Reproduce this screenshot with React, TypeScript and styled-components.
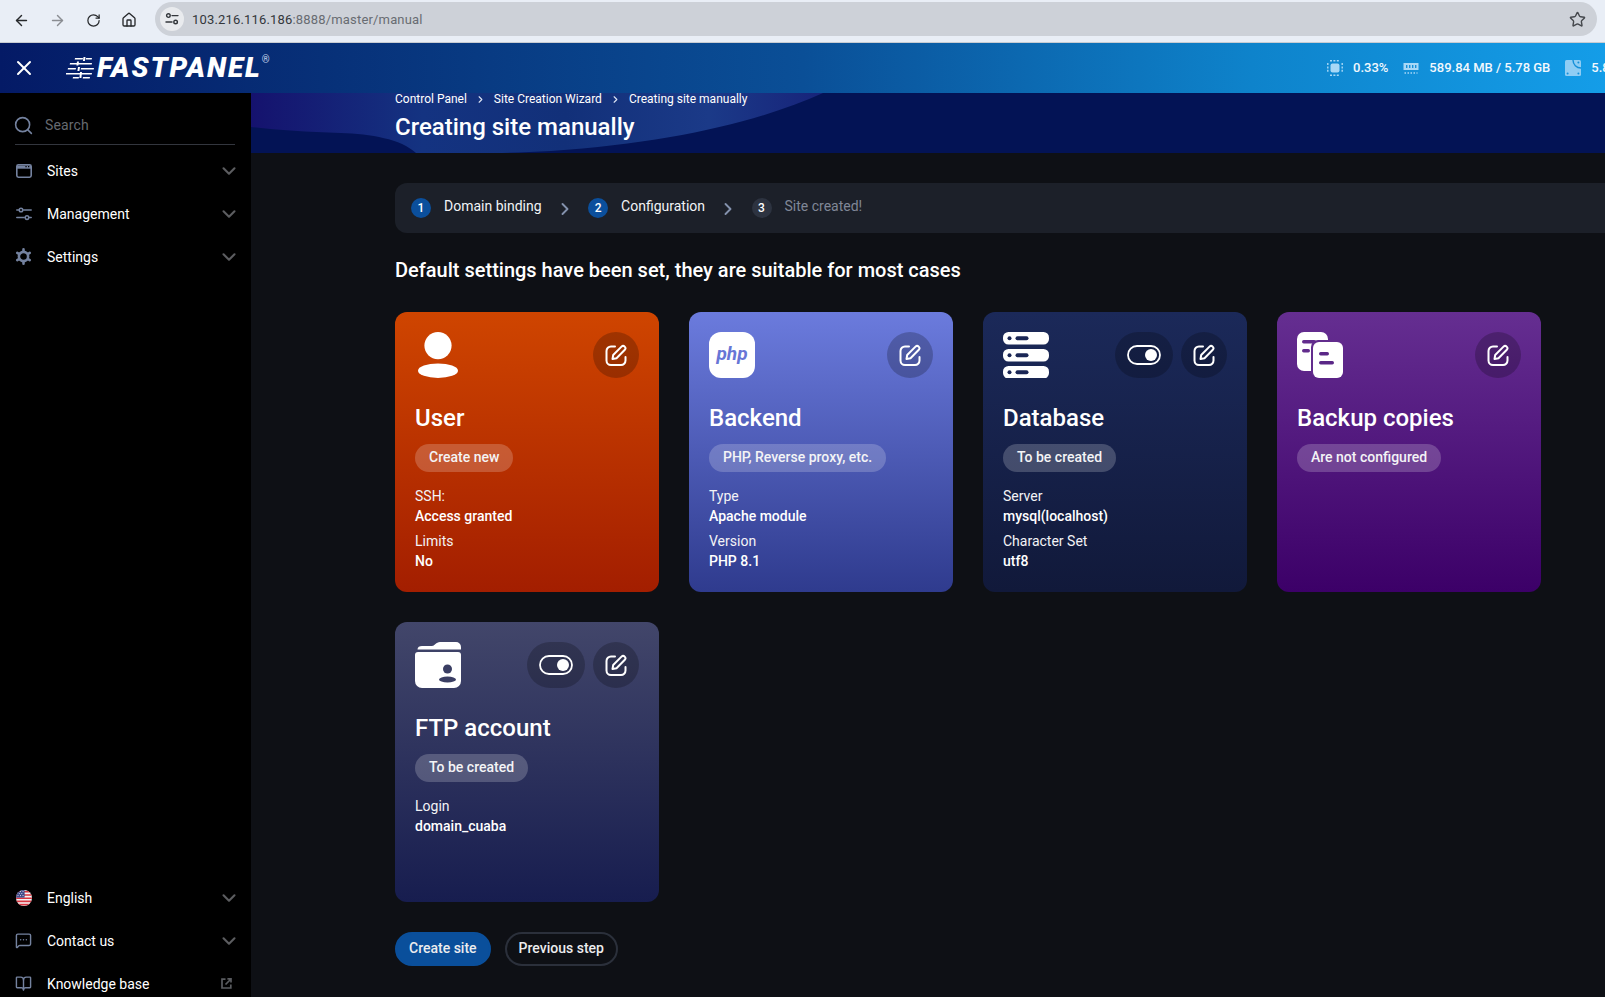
import React from 'react';
import styled, { createGlobalStyle } from 'styled-components';
import { ArrowLeft, ArrowRight, BookOpen, ChevronDown, ChevronRight, Home, MessageSquareMore, RotateCw, Search, Star, X } from 'lucide-react';

const GlobalStyle = createGlobalStyle`
  html, body {
    margin: 0;
    height: 100%;
    overflow: hidden;
    background: #0e1015;
  }
  body {
    font-family: 'Roboto', 'Liberation Sans', sans-serif;
    font-size: 14px;
    color: #fff;
  }
  * {
    box-sizing: border-box;
  }
`;

const Page = styled.div`
  width: 100vw;
  height: 100vh;
  display: flex;
  flex-direction: column;
  overflow: hidden;
`;

const BrowserBar = styled.div`
  height: 43px;
  flex: none;
  display: flex;
  align-items: flex-start;
  padding: 2px 0 0 3px;
  background: #e9eef6;
  border-bottom: 1px solid #c8ccd2;
  color: #3c4043;
`;

const NavButton = styled.div<{ $dim?: boolean }>`
  width: 36px;
  height: 36px;
  display: flex;
  align-items: center;
  justify-content: center;
  color: ${(p) => (p.$dim ? '#8a8d92' : '#26282b')};
`;

const UrlPill = styled.div`
  width: 1442px;
  height: 34px;
  margin-left: 8px;
  display: flex;
  align-items: center;
  padding: 0 11px 0 5px;
  border-radius: 17px;
  background: #cdd1d8;
  font-size: 13px;
  letter-spacing: 0.17px;
`;

const SiteInfo = styled.div`
  width: 24px;
  height: 24px;
  margin-right: 8px;
  display: flex;
  align-items: center;
  justify-content: center;
  border-radius: 50%;
  background: #e9ebee;
`;

const UrlHost = styled.span`
  color: #33373b;
`;

const UrlPath = styled.span`
  color: #686c72;
  flex: 1;
`;

const TopBar = styled.header`
  height: 50px;
  flex: none;
  display: flex;
  align-items: center;
  overflow: hidden;
  background: linear-gradient(90deg, #041a66 0%, #073078 20%, #0a4f97 50%, #0e83cb 78%, #149de8 100%);
`;

const CloseButton = styled.div`
  width: 48px;
  flex: none;
  display: flex;
  justify-content: center;
`;

const Logo = styled.div`
  width: 212px;
  display: flex;
  align-items: center;
  margin-left: 18px;
  flex: none;
`;

const LogoWord = styled.span`
  margin-left: 1px;
  font-size: 28px;
  line-height: 30px;
  font-weight: 900;
  font-style: italic;
  letter-spacing: 1.9px;
`;

const LogoMark = styled.sup`
  font-size: 10px;
  line-height: 10px;
  align-self: flex-start;
  margin: 2px 0 0 0;
  color: #c7d3ea;
`;

const Stats = styled.div`
  margin-left: 1049px;
  padding-bottom: 1px;
  display: flex;
  align-items: center;
  flex: none;
  font-size: 13px;
  font-weight: 500;
  color: #f2f8fd;
`;

const Stat = styled.div`
  display: flex;
  align-items: center;
  gap: 10px;
  margin-right: 15px;
  white-space: nowrap;
`;

const Body = styled.div`
  flex: 1;
  min-height: 0;
  display: flex;
`;

const Sidebar = styled.nav`
  width: 251px;
  flex: none;
  display: flex;
  flex-direction: column;
  justify-content: space-between;
  overflow: hidden;
  background: #000;
  padding: 0 16px 0 15px;
`;

const SearchRow = styled.div`
  height: 52px;
  display: flex;
  align-items: center;
  gap: 11px;
  padding-top: 13px;
  margin-bottom: 4px;
  border-bottom: 1px solid #33363e;
  color: #666a70;
  font-size: 14px;
  letter-spacing: 0.15px;
`;

const SearchIcon = styled(Search)`
  margin-left: -2px;
`;

const MenuGroup = styled.div<{ $bottom?: boolean }>`
  display: flex;
  flex-direction: column;
  margin-bottom: ${(p) => (p.$bottom ? '-8px' : '0')};
`;

const MenuRow = styled.div`
  height: 43px;
  display: flex;
  align-items: center;
  gap: 15px;
  font-size: 14px;
  color: #fff;
`;

const MenuIcon = styled.span`
  width: 17px;
  height: 17px;
  flex: none;
  display: flex;
  align-items: center;
  justify-content: center;
  color: #74829f;
`;

const MenuLabel = styled.span`
  flex: 1;
`;

const MenuChevron = styled(ChevronDown)`
  margin-right: -5px;
  color: #5c5d60;
`;

const OutLink = styled.svg`
  margin-right: 3px;
`;

const Main = styled.main`
  flex: 1;
  min-width: 0;
  display: flex;
  flex-direction: column;
  background: #0e1015;
`;

const PageHead = styled.div`
  position: relative;
  height: 60px;
  flex: none;
  overflow: hidden;
  padding-left: 144px;
  background: #031355;
`;

const Swoosh = styled.svg`
  position: absolute;
  top: 0;
  left: 0;
`;

const Crumbs = styled.div`
  position: relative;
  display: flex;
  align-items: center;
  height: 12px;
  font-size: 12px;
  line-height: 12px;
`;

const CrumbArrow = styled.span`
  display: flex;
  width: 27px;
  justify-content: center;
  color: #dfe6f5;
`;

const PageTitle = styled.h1`
  position: relative;
  margin: 6px 0 0;
  font-size: 24px;
  line-height: 32px;
  font-weight: 500;
`;

const Content = styled.div`
  padding: 30px 0 0 144px;
`;

const Stepper = styled.div`
  width: 1300px;
  height: 50px;
  display: flex;
  align-items: center;
  padding-left: 16px;
  border-radius: 12px;
  background: #1c2029;
`;

const StepNumber = styled.span<{ $active: boolean }>`
  width: 20px;
  height: 20px;
  flex: none;
  display: flex;
  align-items: center;
  justify-content: center;
  border-radius: 50%;
  font-size: 12px;
  font-weight: 500;
  background: ${(p) => (p.$active ? '#0b4f9c' : '#2d3340')};
`;

const StepLabel = styled.span<{ $active: boolean }>`
  margin-left: 13px;
  margin-bottom: 4px;
  color: ${(p) => (p.$active ? '#f1f3f6' : '#808797')};
`;

const StepArrow = styled.span`
  width: 46.5px;
  display: flex;
  justify-content: center;
  padding-top: 2px;
  color: #8391ac;
`;

const Heading = styled.h2`
  margin: 23px 0 28px;
  font-size: 20px;
  line-height: 28px;
  font-weight: 500;
`;

const CardGrid = styled.div`
  display: grid;
  grid-template-columns: repeat(4, 264px);
  grid-auto-rows: 280px;
  gap: 30px;
`;

const Card = styled.section<{ $from: string; $to: string }>`
  padding: 20px;
  border-radius: 12px;
  background: linear-gradient(180deg, ${(p) => p.$from}, ${(p) => p.$to});
`;

const CardTop = styled.div`
  height: 46px;
  display: flex;
  align-items: flex-start;
  gap: 8px;
`;

const CardIcon = styled.div`
  height: 46px;
  margin-right: auto;
  display: flex;
`;

const RoundButton = styled.div<{ $wide?: boolean }>`
  width: ${(p) => (p.$wide ? '58px' : '46px')};
  height: 46px;
  display: flex;
  align-items: center;
  justify-content: center;
  border-radius: 23px;
  background: rgba(0, 0, 0, 0.22);
`;

const CardTitle = styled.h3`
  margin: 24px 0 0;
  font-size: 24px;
  line-height: 32px;
  font-weight: 500;
`;

const Pill = styled.div`
  display: inline-flex;
  align-items: center;
  height: 28px;
  margin-top: 10px;
  padding: 0 14px 2px;
  border-radius: 14px;
  background: rgba(255, 255, 255, 0.2);
  font-weight: 500;
  color: #f4f4f6;
`;

const MetaList = styled.dl`
  margin: 14px 0 0;
  display: flex;
  flex-direction: column;
  gap: 5px;
`;

const MetaLabel = styled.dt`
  line-height: 20px;
  color: #f3f3f6;
`;

const MetaValue = styled.dd`
  margin: 0;
  line-height: 20px;
  font-weight: 500;
`;

const Actions = styled.div`
  display: flex;
  gap: 14px;
  margin-top: 30px;
`;

const ActionButton = styled.button<{ $primary?: boolean }>`
  height: 34px;
  padding: 0 12px 2px;
  border-radius: 17px;
  border: 2px solid ${(p) => (p.$primary ? '#0a4f9b' : '#2b303b')};
  background: ${(p) => (p.$primary ? '#0a4f9b' : 'transparent')};
  color: #ececee;
  font: 500 14px 'Roboto', sans-serif;
`;

const EditIcon = () => (
  <svg width="22" height="22" viewBox="0 0 22 22" fill="none" stroke="#fff" strokeWidth="2" strokeLinecap="round" strokeLinejoin="round">
    <path d="M10 2.5H6A4.5 4.5 0 0 0 1.5 7v9.5A4.5 4.5 0 0 0 6 21h10a4.5 4.5 0 0 0 4.5-4.5V13" />
    <path d="M7.5 15l.7-4L16.5 2.6a2.3 2.3 0 0 1 3.3 3.2L11.5 14.2z" />
  </svg>
);

const ToggleIcon = () => (
  <svg width="34" height="20" viewBox="0 0 34 20" fill="none">
    <rect x="1" y="1" width="32" height="18" rx="9" stroke="#fff" strokeWidth="1.8" />
    <circle cx="24" cy="10" r="6" fill="#fff" />
  </svg>
);

const UserIcon = () => (
  <svg width="46" height="46" viewBox="-3 0 46 46" fill="#fff">
    <circle cx="20" cy="13.6" r="13.6" />
    <ellipse cx="20" cy="38.7" rx="20" ry="7.3" />
  </svg>
);

const PhpIcon = ({ color }: { color: string }) => (
  <svg width="46" height="46" viewBox="0 0 46 46">
    <rect width="46" height="46" rx="12" fill="#fff" />
    <text x="23" y="28" textAnchor="middle" fontFamily="Roboto, sans-serif" fontSize="19" fontWeight="700" fontStyle="italic" fill={color}>
      php
    </text>
  </svg>
);

const ServerIcon = () => (
  <svg width="46" height="46" viewBox="0 0 46 46">
    {[0, 17, 34].map((y) => (
      <g key={y}>
        <rect y={y} width="46" height="12.5" rx="5.5" fill="#fff" />
        <circle cx="6.5" cy={y + 6.3} r="2" fill="#1a2655" />
        <rect x="12.5" y={y + 4.3} width="13" height="4" rx="2" fill="#1a2655" />
      </g>
    ))}
  </svg>
);

const CopiesIcon = () => (
  <svg width="46" height="46" viewBox="0 0 46 46">
    <path d="M7 0h17a7 7 0 0 1 7 7v32H7a7 7 0 0 1-7-7V7a7 7 0 0 1 7-7z" fill="#fff" />
    <rect x="5" y="8" width="14" height="3.4" rx="1.7" fill="#622c8d" />
    <rect x="5" y="17" width="8" height="3.4" rx="1.7" fill="#622c8d" />
    <rect x="14" y="8" width="32" height="38" rx="7" fill="#622c8d" />
    <rect x="16" y="10" width="30" height="36" rx="6" fill="#fff" />
    <rect x="22" y="20" width="10" height="3.4" rx="1.7" fill="#5a2787" />
    <rect x="22" y="29" width="15" height="3.4" rx="1.7" fill="#5a2787" />
  </svg>
);

const FolderIcon = () => (
  <svg width="46" height="46" viewBox="0 0 46 46">
    <path d="M2.5 7.5C2.5 5 4.5 4 7 4H17C19.5 4 21 0 25 0H41a5 5 0 0 1 5 5v2.5Z" fill="#fff" />
    <path d="M0 13a3 3 0 0 1 3-3h40a3 3 0 0 1 3 3v26a7 7 0 0 1-7 7H7a7 7 0 0 1-7-7z" fill="#fff" />
    <circle cx="32.5" cy="27" r="4.5" fill="#3a3e63" />
    <ellipse cx="32.5" cy="37.5" rx="8.5" ry="3" fill="#3a3e63" />
  </svg>
);

const WindowIcon = () => (
  <svg width="16" height="14" viewBox="0 0 16 14" fill="none">
    <rect x="0.8" y="0.8" width="14.4" height="12.4" rx="1.6" stroke="currentColor" strokeWidth="1.6" />
    <path d="M1 1.5h14v3.2H1z" fill="currentColor" />
    <path d="M9.4 2.6h1.3M12 2.6h1.3" stroke="#000" strokeWidth="1.1" />
  </svg>
);

const SlidersIcon = () => (
  <svg width="16" height="14" viewBox="0 0 16 14" fill="none" stroke="currentColor" strokeWidth="1.5" strokeLinecap="round">
    <circle cx="5" cy="3" r="1.8" />
    <circle cx="11" cy="10.6" r="1.8" />
    <path d="M0.8 3h1.8M7.6 3h7.6M0.8 10.6h7.4M13.6 10.6h1.6" />
  </svg>
);

const GearIcon = () => (
  <svg width="17" height="17" viewBox="0 0 24 24" fill="none" stroke="currentColor" strokeWidth="3.6" strokeLinecap="round">
    <circle cx="12" cy="12" r="6.5" />
    <path d="M12 1.8v2.6M12 19.6v2.6M3.2 6.9l2.2 1.3M18.6 15.8l2.2 1.3M3.2 17.1l2.2-1.3M18.6 8.2l2.2-1.3" />
  </svg>
);

const FlagIcon = () => (
  <svg width="16" height="16" viewBox="0 0 16 16">
    <defs>
      <clipPath id="flag-round">
        <circle cx="8" cy="8" r="8" />
      </clipPath>
    </defs>
    <g clipPath="url(#flag-round)">
      <rect width="16" height="16" fill="#f4f4f6" />
      <path d="M0 1h16v1.6H0zM0 4.2h16v1.6H0zM0 7.4h16V9H0zM0 10.6h16v1.6H0zM0 13.8h16v1.6H0z" fill="#d8343f" />
      <rect width="8.6" height="7.6" fill="#3d4a8a" />
      <path d="M1.5 1.6h1M4 1.6h1M6.5 1.6h1M2.8 3.6h1M5.3 3.6h1M1.5 5.6h1M4 5.6h1M6.5 5.6h1" stroke="#fff" strokeWidth="0.8" />
    </g>
  </svg>
);

const OutLinkIcon = () => (
  <OutLink width="11" height="11" viewBox="0 0 11 11" fill="none" stroke="#5a5c60" strokeWidth="1.7">
    <path d="M4.5 1.2H1v8.8h8.8V6.5" />
    <path d="M4.5 6.5L10 1M6.4 0.9H10v3.6" />
  </OutLink>
);

const TuneIcon = () => (
  <svg width="14" height="12" viewBox="0 0 14 12" fill="none" stroke="#33373b" strokeWidth="1.4" strokeLinecap="round">
    <circle cx="3.4" cy="2.6" r="1.8" />
    <circle cx="10.6" cy="9" r="1.8" />
    <path d="M7 2.6h6M1 9h6" />
  </svg>
);

const LogoSliders = () => (
  <svg width="30" height="22" viewBox="0 0 30 22" fill="#fff">
    <path d="M9 1h8l-.3 1.6H8.7zM20 1h6l-.3 1.6h-6zM4 6h22l-.3 1.6H3.7zM2 11h8l-.3 1.6H1.7zM15 11h13l-.3 1.6h-13zM0 16h26l-.3 1.6H0zM7 20h6l-.3 1.4h-6zM17 20h7l-.3 1.4h-7z" />
    <path d="M17.5 0h2l-.6 4h-2zM11 4.6h2l-.6 4h-2zM12 10h2l-.6 4h-2zM14 15h2l-.6 6h-2z" />
  </svg>
);

const CpuIcon = () => (
  <svg width="16" height="16" viewBox="0 0 16 16">
    <rect x="3.5" y="3.5" width="9" height="9" rx="2" fill="#a8d8f6" />
    <path d="M3 .8h10M3 15.2h10M.8 3v10M15.2 3v10" stroke="#a8d8f6" strokeWidth="1.4" strokeDasharray="2 1.4" />
  </svg>
);

const RamIcon = () => (
  <svg width="16" height="14" viewBox="0 0 16 14">
    <path d="M.5 2h15v7h-15z" fill="#a8d8f6" />
    <path d="M3 4h1.4v3H3zM6 4h1.4v3H6zM9 4h1.4v3H9zM12 4h1.4v3H12z" fill="#1490d9" />
    <path d="M1.5 12h13" stroke="#a8d8f6" strokeWidth="1.5" strokeDasharray="1.5 1.5" />
  </svg>
);

const DiskIcon = () => (
  <svg width="16" height="16" viewBox="0 0 16 16">
    <rect width="16" height="16" rx="1.5" fill="#8fcdf4" />
    <path d="M8 0c0 4.5 3.5 8 8 8" fill="none" stroke="#1490d9" strokeWidth="1.4" />
    <circle cx="13.4" cy="2.6" r="1" fill="#1490d9" />
    <circle cx="2.6" cy="13.4" r="1" fill="#1490d9" />
    <circle cx="13.4" cy="13.4" r="1" fill="#1490d9" />
  </svg>
);

const topMenu = [
  { label: 'Sites', icon: <WindowIcon /> },
  { label: 'Management', icon: <SlidersIcon /> },
  { label: 'Settings', icon: <GearIcon /> },
];

const cards = [
  {
    title: 'User',
    status: 'Create new',
    from: '#cf4500',
    to: '#a31e00',
    icon: <UserIcon />,
    meta: [
      ['SSH:', 'Access granted'],
      ['Limits', 'No'],
    ],
  },
  {
    title: 'Backend',
    status: 'PHP, Reverse proxy, etc.',
    from: '#6b7bdd',
    to: '#2f3b8e',
    icon: <PhpIcon color="#6776d6" />,
    meta: [
      ['Type', 'Apache module'],
      ['Version', 'PHP 8.1'],
    ],
  },
  {
    title: 'Database',
    status: 'To be created',
    from: '#1b2959',
    to: '#11193a',
    toggle: true,
    icon: <ServerIcon />,
    meta: [
      ['Server', 'mysql(localhost)'],
      ['Character Set', 'utf8'],
    ],
  },
  {
    title: 'Backup copies',
    status: 'Are not configured',
    from: '#652e91',
    to: '#3c0068',
    icon: <CopiesIcon />,
    meta: [],
  },
  {
    title: 'FTP account',
    status: 'To be created',
    from: '#42466a',
    to: '#171d4f',
    toggle: true,
    icon: <FolderIcon />,
    meta: [['Login', 'domain_cuaba']],
  },
];

const steps = [
  { n: 1, label: 'Domain binding', active: true },
  { n: 2, label: 'Configuration', active: true },
  { n: 3, label: 'Site created!', active: false },
];

const crumbs = ['Control Panel', 'Site Creation Wizard', 'Creating site manually'];

const App: React.FC = () => (
  <Page>
    <GlobalStyle />
    <BrowserBar>
      <NavButton>
        <ArrowLeft size={17} strokeWidth={2} />
      </NavButton>
      <NavButton $dim>
        <ArrowRight size={17} strokeWidth={2} />
      </NavButton>
      <NavButton>
        <RotateCw size={15} strokeWidth={2} />
      </NavButton>
      <NavButton>
        <Home size={16} strokeWidth={2} />
      </NavButton>
      <UrlPill>
        <SiteInfo>
          <TuneIcon />
        </SiteInfo>
        <UrlHost>103.216.116.186</UrlHost>
        <UrlPath>:8888/master/manual</UrlPath>
        <Star size={17} strokeWidth={2} color="#45484d" />
      </UrlPill>
    </BrowserBar>

    <TopBar>
      <CloseButton>
        <X size={24} strokeWidth={2} />
      </CloseButton>
      <Logo>
        <LogoSliders />
        <LogoWord>FASTPANEL</LogoWord>
        <LogoMark>®</LogoMark>
      </Logo>
      <Stats>
        <Stat>
          <CpuIcon />
          0.33%
        </Stat>
        <Stat>
          <RamIcon />
          589.84 MB / 5.78 GB
        </Stat>
        <Stat>
          <DiskIcon />
          5.81 GB / 19.56 GB
        </Stat>
      </Stats>
    </TopBar>

    <Body>
      <Sidebar>
        <MenuGroup>
          <SearchRow>
            <SearchIcon size={21} strokeWidth={1.8} color="#74829f" />
            Search
          </SearchRow>
          {topMenu.map((item) => (
            <MenuRow key={item.label}>
              <MenuIcon>{item.icon}</MenuIcon>
              <MenuLabel>{item.label}</MenuLabel>
              <MenuChevron size={22} strokeWidth={2.3} />
            </MenuRow>
          ))}
        </MenuGroup>
        <MenuGroup $bottom>
          <MenuRow>
            <MenuIcon>
              <FlagIcon />
            </MenuIcon>
            <MenuLabel>English</MenuLabel>
            <MenuChevron size={22} strokeWidth={2.3} />
          </MenuRow>
          <MenuRow>
            <MenuIcon>
              <MessageSquareMore size={19} strokeWidth={2} />
            </MenuIcon>
            <MenuLabel>Contact us</MenuLabel>
            <MenuChevron size={22} strokeWidth={2.3} />
          </MenuRow>
          <MenuRow>
            <MenuIcon>
              <BookOpen size={19} strokeWidth={2} />
            </MenuIcon>
            <MenuLabel>Knowledge base</MenuLabel>
            <OutLinkIcon />
          </MenuRow>
        </MenuGroup>
      </Sidebar>

      <Main>
        <PageHead>
          <Swoosh width="1354" height="60" viewBox="0 0 1354 60">
            <defs>
              <linearGradient id="swoosh-fill" x1="0" x2="1" y1="0" y2="0">
                <stop offset="0" stopColor="#15126e" />
                <stop offset="0.3" stopColor="#143381" />
                <stop offset="0.55" stopColor="#123079" />
                <stop offset="0.8" stopColor="#1b3a88" />
                <stop offset="1" stopColor="#17237a" />
              </linearGradient>
            </defs>
            <path d="M0 0H572C510 28 420 50 300 58C250 61 205 60 165 60C150 46 120 41 90 40C55 39 25 37 0 34Z" fill="url(#swoosh-fill)" />
          </Swoosh>
          <Crumbs>
            {crumbs.map((crumb, i) => (
              <React.Fragment key={crumb}>
                {i > 0 && (
                  <CrumbArrow>
                    <ChevronRight size={11} strokeWidth={2.4} />
                  </CrumbArrow>
                )}
                {crumb}
              </React.Fragment>
            ))}
          </Crumbs>
          <PageTitle>Creating site manually</PageTitle>
        </PageHead>

        <Content>
          <Stepper>
            {steps.map((step, i) => (
              <React.Fragment key={step.n}>
                {i > 0 && (
                  <StepArrow>
                    <ChevronRight size={20} strokeWidth={2.3} />
                  </StepArrow>
                )}
                <StepNumber $active={step.active}>{step.n}</StepNumber>
                <StepLabel $active={step.active}>{step.label}</StepLabel>
              </React.Fragment>
            ))}
          </Stepper>

          <Heading>Default settings have been set, they are suitable for most cases</Heading>

          <CardGrid>
            {cards.map((card) => (
              <Card key={card.title} $from={card.from} $to={card.to}>
                <CardTop>
                  <CardIcon>{card.icon}</CardIcon>
                  {card.toggle && (
                    <RoundButton $wide>
                      <ToggleIcon />
                    </RoundButton>
                  )}
                  <RoundButton>
                    <EditIcon />
                  </RoundButton>
                </CardTop>
                <CardTitle>{card.title}</CardTitle>
                <Pill>{card.status}</Pill>
                {card.meta.length > 0 && (
                  <MetaList>
                    {card.meta.map(([label, value]) => (
                      <div key={label}>
                        <MetaLabel>{label}</MetaLabel>
                        <MetaValue>{value}</MetaValue>
                      </div>
                    ))}
                  </MetaList>
                )}
              </Card>
            ))}
          </CardGrid>

          <Actions>
            <ActionButton $primary>Create site</ActionButton>
            <ActionButton>Previous step</ActionButton>
          </Actions>
        </Content>
      </Main>
    </Body>
  </Page>
);

export default App;
